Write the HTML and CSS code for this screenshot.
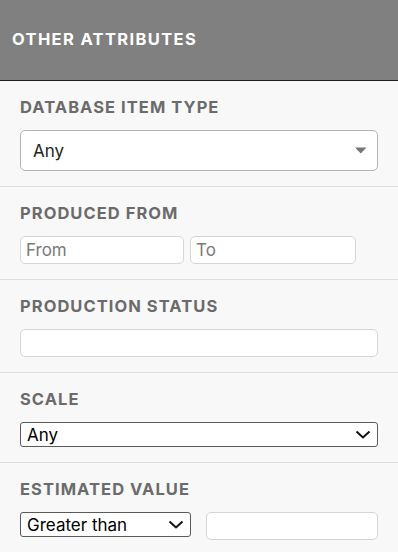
FILE: index.html
```html
<!DOCTYPE html>
<html lang="en">
<head>
<meta charset="utf-8">
<title>Other attributes</title>
<link rel="stylesheet" href="styles.css">
</head>
<body>
<div class="panel">
  <header class="panel-header">
    <h2 class="panel-title">OTHER ATTRIBUTES</h2>
  </header>

  <section class="field">
    <label class="field-label">DATABASE ITEM TYPE</label>
    <div class="select-wrap">
      <select class="select-large"><option>Any</option></select>
      <svg class="caret" width="12" height="7" viewBox="0 0 12 7"><path d="M0 0.5 H11.5 L5.75 6.5 Z" fill="#777"/></svg>
    </div>
  </section>

  <section class="field">
    <label class="field-label">PRODUCED FROM</label>
    <div class="range">
      <input class="text-input input-from" type="text" placeholder="From">
      <input class="text-input input-to" type="text" placeholder="To">
    </div>
  </section>

  <section class="field">
    <label class="field-label">PRODUCTION STATUS</label>
    <input class="text-input input-full" type="text">
  </section>

  <section class="field">
    <label class="field-label">SCALE</label>
    <div class="select-wrap">
      <select class="select-native"><option>Any</option></select>
      <svg class="chevron" width="16" height="9" viewBox="0 0 16 9"><path d="M1.5 1.5 L8 7.5 L14.5 1.5" fill="none" stroke="#111" stroke-width="2"/></svg>
    </div>
  </section>

  <section class="field">
    <label class="field-label">ESTIMATED VALUE</label>
    <div class="compare">
      <div class="select-wrap compare-select">
        <select class="select-native"><option>Greater than</option></select>
        <svg class="chevron" width="16" height="9" viewBox="0 0 16 9"><path d="M1.5 1.5 L8 7.5 L14.5 1.5" fill="none" stroke="#111" stroke-width="2"/></svg>
      </div>
      <input class="text-input compare-input" type="text">
    </div>
  </section>
</div>
</body>
</html>
```

FILE: styles.css
```css
* { box-sizing: border-box; }
html, body {
  margin: 0;
  padding: 0;
  background: #f8f8f8;
}
body {
  font-family: Inter, "Helvetica Neue", Arial, sans-serif;
  width: 398px;
  height: 552px;
  overflow: hidden;
}
.panel-header {
  height: 81px;
  background: #808080;
  border-bottom: 1px solid #1e1e1e;
  display: flex;
  align-items: center;
  padding: 0 12px;
}
.panel-title {
  margin: 0;
  margin-top: -2px;
  color: #fff;
  font-size: 16.5px;
  font-weight: 700;
  letter-spacing: 1.35px;
  line-height: 20px;
}
.field {
  padding: 16px 20px 15px;
  border-bottom: 1px solid #dedede;
  display: flex;
  flex-direction: column;
}
.field-label {
  display: block;
  font-size: 16.5px;
  line-height: 20px;
  font-weight: 700;
  color: #6b6b6b;
  letter-spacing: 1.05px;
  margin-bottom: 13px;
}
.select-wrap {
  position: relative;
  display: flex;
}
select, input {
  font-family: Inter, "Helvetica Neue", Arial, sans-serif;
  margin: 0;
  outline: none;
}
.select-large {
  appearance: none;
  -webkit-appearance: none;
  width: 358px;
  height: 41px;
  border: 1px solid #b4b4b4;
  border-radius: 5px;
  background: #fff;
  color: #222;
  font-size: 17px;
  padding: 0 12px;
}
.caret {
  position: absolute;
  right: 11px;
  top: 17px;
}
.range {
  display: flex;
  gap: 6px;
}
.text-input {
  height: 28px;
  border: 1px solid #d6d6d6;
  border-radius: 5px;
  background: #fff;
  font-size: 17px;
  padding: 0 5px;
  color: #222;
}
.text-input::placeholder { color: #7a7a7a; }
.input-from { width: 164px; }
.input-to { width: 166px; }
.input-full { width: 358px; }
.select-native {
  appearance: none;
  -webkit-appearance: none;
  width: 358px;
  height: 25px;
  border: 1px solid #5a5a5a;
  border-radius: 3px;
  background: #fff;
  color: #000;
  font-size: 17px;
  padding: 0 6px;
}
.chevron {
  position: absolute;
  right: 7px;
  top: 8px;
}
.compare {
  display: flex;
  align-items: flex-start;
  gap: 15px;
}
.compare-select .select-native { width: 171px; }
.compare-input { width: 172px; }
```
